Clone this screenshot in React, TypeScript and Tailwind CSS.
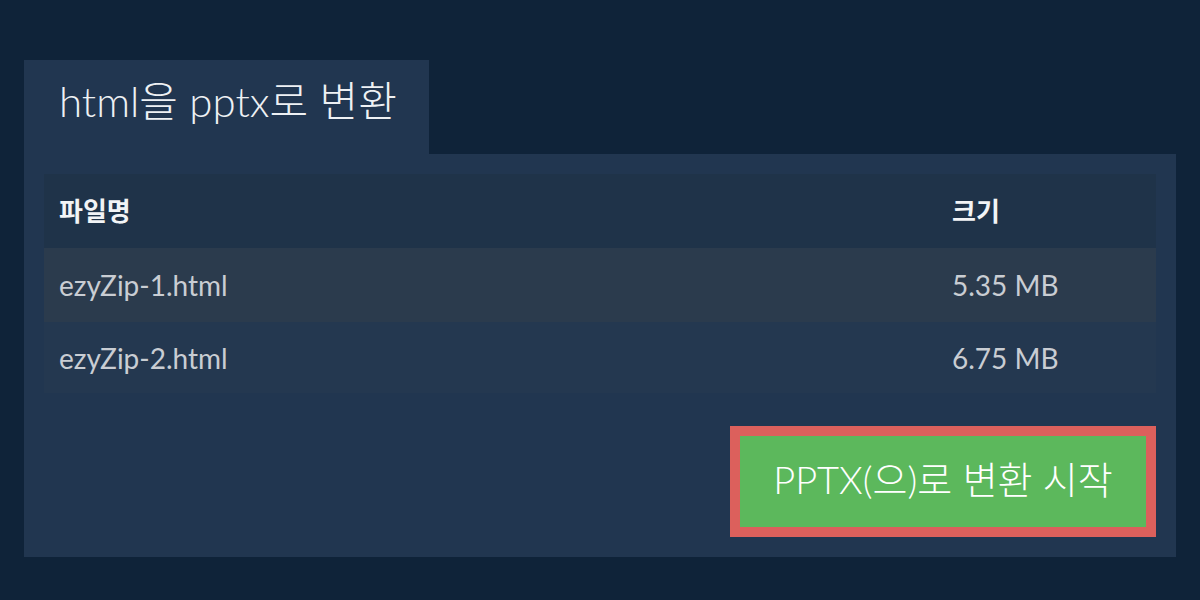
const files = [
  { name: 'ezyZip-1.html', size: '5.35 MB' },
  { name: 'ezyZip-2.html', size: '6.75 MB' },
];

const font = { fontFamily: 'Lato, "Noto Sans CJK KR", sans-serif' };

export default function App() {
  return (
    <div className="h-[600px] w-[1200px] bg-[#0f2339] px-6 pt-[60px]" style={font}>
      <div className="flex">
        <div className="flex h-[94px] w-[405px] items-center bg-[#213650] pl-[35px] pb-[12px]">
          <h1 className="text-[42px] font-light text-[#eef1f4]">html을 pptx로 변환</h1>
        </div>
      </div>
      <div className="h-[403px] bg-[#213650] px-5 pt-5">
        <table className="w-full border-collapse text-left">
          <thead>
            <tr className="h-[74px] bg-[#1f3349]">
              <th className="pl-[15px] text-[26px] font-bold text-[#f2f4f6]">파일명</th>
              <th className="w-[204px] text-[26px] font-bold text-[#f2f4f6]">크기</th>
            </tr>
          </thead>
          <tbody>
            {files.map((f, i) => (
              <tr key={f.name} className={i === 0 ? 'h-[74px] bg-[#2b3b4d]' : 'h-[71px] bg-[#243850]'}>
                <td className="pl-[15px] text-[28px] text-[#c9cdd3]">{f.name}</td>
                <td className="text-[28px] text-[#c9cdd3]">{f.size}</td>
              </tr>
            ))}
          </tbody>
        </table>
        <div className="mt-[33px] flex justify-end">
          <button className="h-[111px] w-[426px] border-[10px] border-[#dc605c] bg-[#5cb85c] pb-1 text-[38px] font-light text-white">
            PPTX(으)로 변환 시작
          </button>
        </div>
      </div>
    </div>
  );
}
